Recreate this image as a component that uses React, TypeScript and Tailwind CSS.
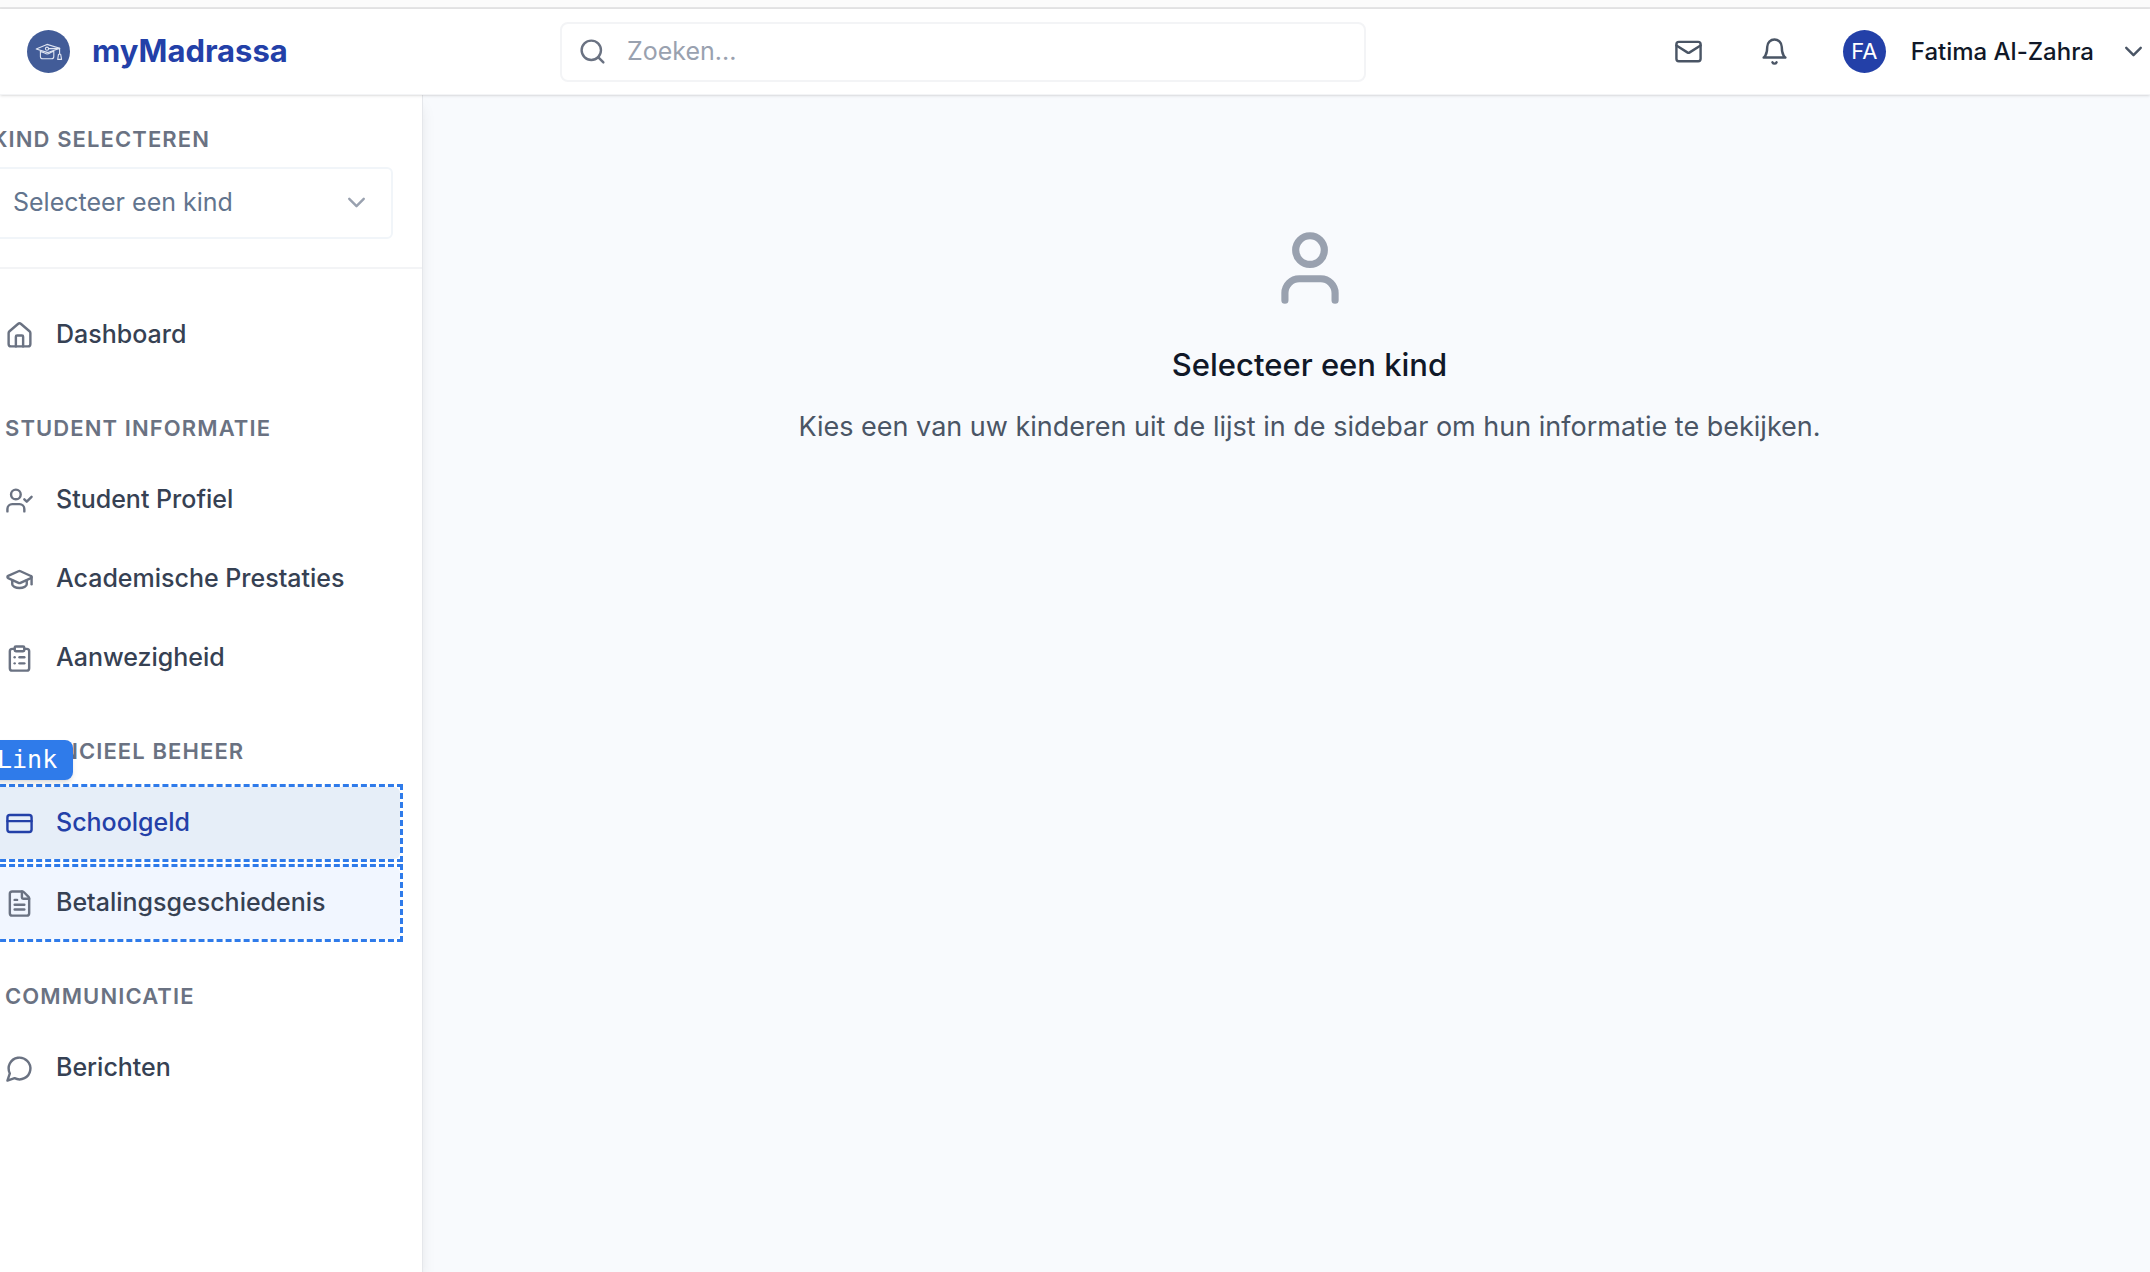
import type { ReactNode } from "react";
import {
  ChevronDown,
  ClipboardList,
  CreditCard,
  FileText,
  GraduationCap,
  House,
  Mail,
  Search,
  User,
  UserCheck,
} from "lucide-react";

const strokeProps = {
  viewBox: "0 0 24 24",
  fill: "none",
  stroke: "currentColor",
  strokeWidth: 2,
  strokeLinecap: "round",
  strokeLinejoin: "round",
} as const;

function BellIcon({ className }: { className?: string }) {
  return (
    <svg {...strokeProps} className={className} aria-hidden="true">
      <path d="M6 8a6 6 0 0 1 12 0c0 7 3 9 3 9H3s3-2 3-9" />
      <path d="M10.3 21a1.94 1.94 0 0 0 3.4 0" />
    </svg>
  );
}

function MessageIcon({ className }: { className?: string }) {
  return (
    <svg {...strokeProps} className={className} aria-hidden="true">
      <path d="M7.9 20A9 9 0 1 0 4 16.1L2 22Z" />
    </svg>
  );
}

function Logo() {
  return (
    <svg viewBox="0 0 43 43" className="size-[43px] shrink-0" aria-hidden="true">
      <circle cx="21.5" cy="21.5" r="21.5" fill="#425c98" />
      <g fill="none" stroke="#dfe5f2" strokeWidth="1.1" strokeLinejoin="round" strokeLinecap="round">
        <path d="M9.2 19 20 14.4 32.8 18.3 21 22.6Z" />
        <path d="M13.4 21v5.4c0 1.5.9 2.4 2.5 2.4h8.6c1.5 0 2.3-.9 2.3-2.3v-5.3" />
        <path d="M13.4 21.6c4 .3 4.6 2.4 6.8 2.4s3-2.1 6.3-2.6" />
        <circle cx="20" cy="18.7" r="1.6" />
        <path d="M21.7 18.6 32.6 18.4V24M31.5 24.3h2.2l.9 5.1h-3.9Z" />
      </g>
    </svg>
  );
}

function NavHeading({ children }: { children: ReactNode }) {
  return (
    <h2 className="mt-[43px] mb-[22px] px-5 text-[22px] leading-7 font-semibold tracking-wider text-gray-500 uppercase">
      {children}
    </h2>
  );
}

type NavItemProps = {
  icon: ReactNode;
  label: string;
  state?: "plain" | "active" | "outlined";
  tag?: string;
};

function NavItem({ icon, label, state = "plain", tag }: NavItemProps) {
  const look = {
    plain: "text-gray-700",
    active: "bg-[#e6eef8] text-[#2340a8]",
    outlined: "bg-[#f1f6ff] text-gray-700",
  }[state];
  return (
    <li className={state === "plain" ? "" : "relative outline-3 outline-dashed outline-[#2f7bea]"}>
      <a
        href="#"
        className={`flex h-[72px] items-center gap-[22px] rounded-md px-5 text-[25px] font-medium ${look}`}
      >
        <span className={state === "active" ? "text-[#2340a8]" : "text-gray-500"}>{icon}</span>
        {label}
      </a>
      {tag && (
        <span className="absolute bottom-full -left-1 mb-[7px] rounded-lg bg-[#2f7bea] px-4 font-['DejaVu_Sans_Mono',monospace] text-[25px] leading-10 text-white shadow-md">
          {tag}
        </span>
      )}
    </li>
  );
}

const icon = "size-[29px] shrink-0";

export default function App() {
  return (
    <div className="flex min-h-screen flex-col overflow-hidden bg-[#f8fafd] font-[Inter,sans-serif]">
      <div className="h-[9px] border-b-2 border-[#e5e5e6] bg-[#fbfbfb]" />
      <header className="relative z-10 flex h-[86px] items-center border-b border-gray-100 bg-white pr-0.5 pl-[27px] shadow-sm">
        <a href="#" className="flex w-[533px] items-center gap-[22px] text-[31px] font-bold text-[#2340a8]">
          <Logo />
          myMadrassa
        </a>
        <label className="flex h-[60px] max-w-[806px] flex-1 items-center gap-5 rounded-lg border-2 border-gray-100 px-4 text-gray-500">
          <Search className={icon} />
          <input
            type="text"
            aria-label="Zoeken"
            placeholder="Zoeken..."
            className="min-w-0 flex-1 bg-transparent text-[25px] outline-none placeholder:text-gray-400"
          />
        </label>
        <div className="ml-auto flex items-center">
          <button type="button" aria-label="Berichten" className="mr-[57px] text-gray-600">
            <Mail className={icon} />
          </button>
          <button type="button" aria-label="Meldingen" className="mr-[54px] text-gray-600">
            <BellIcon className={icon} />
          </button>
          <button type="button" className="flex items-center text-[24px] font-medium text-gray-900">
            <span className="flex size-[43px] items-center justify-center rounded-full bg-[#2340a8] text-[22px] font-normal text-white">
              FA
            </span>
            <span className="mx-[25px]">Fatima Al-Zahra</span>
            <ChevronDown className="size-[29px] shrink-0 text-gray-600" />
          </button>
        </div>
      </header>

      <div className="flex flex-1">
        <aside className="-ml-[37px] w-[460px] shrink-0 border-r border-gray-200 bg-white shadow-lg">
          <div className="border-b-2 border-gray-100 px-[29px] pt-[30px] pb-7">
            <label
              htmlFor="child"
              className="mb-[14px] block text-[22px] leading-7 font-semibold tracking-wider text-gray-500 uppercase"
            >
              Kind selecteren
            </label>
            <div className="relative">
              <select
                id="child"
                className="block h-[72px] w-full appearance-none rounded-md border-2 border-slate-100 bg-white px-[19px] text-[25px] text-slate-500"
              >
                <option>Selecteer een kind</option>
              </select>
              <ChevronDown className="pointer-events-none absolute top-[21px] right-[22px] size-[29px] text-gray-400" />
            </div>
          </div>
          <nav className="px-[22px] pt-[30px]">
            <ul>
              <NavItem icon={<House className={icon} />} label="Dashboard" />
            </ul>
            <NavHeading>Student informatie</NavHeading>
            <ul className="flex flex-col gap-[7px]">
              <NavItem icon={<UserCheck className={icon} />} label="Student Profiel" />
              <NavItem icon={<GraduationCap className={icon} />} label="Academische Prestaties" />
              <NavItem icon={<ClipboardList className={icon} />} label="Aanwezigheid" />
            </ul>
            <NavHeading>Financieel beheer</NavHeading>
            <ul className="flex flex-col gap-2">
              <NavItem icon={<CreditCard className={icon} />} label="Schoolgeld" state="active" tag="Link" />
              <NavItem icon={<FileText className={icon} />} label="Betalingsgeschiedenis" state="outlined" />
            </ul>
            <NavHeading>Communicatie</NavHeading>
            <ul>
              <NavItem icon={<MessageIcon className={icon} />} label="Berichten" />
            </ul>
          </nav>
        </aside>

        <main className="flex flex-1 flex-col items-center pt-[130px] pl-[46px] text-center">
          <User className="size-[86px] text-gray-400" />
          <h1 className="mt-[34px] text-[31px] leading-10 font-medium text-gray-900">Selecteer een kind</h1>
          <p className="mt-[22px] text-[27px] leading-10 text-gray-600">
            Kies een van uw kinderen uit de lijst in de sidebar om hun informatie te bekijken.
          </p>
        </main>
      </div>
    </div>
  );
}
